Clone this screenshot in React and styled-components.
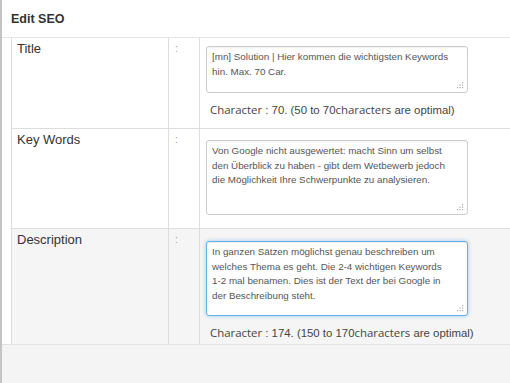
import React from "react";
import styled, { createGlobalStyle } from "styled-components";

const Global = createGlobalStyle`
  html, body { margin: 0; padding: 0; background: #fff; }
  body { width: 510px; height: 383px; overflow: hidden; font-family: "Liberation Sans", Arial, sans-serif; }
`;

const Page = styled.div`
  box-sizing: border-box;
  height: 383px;
  border-left: 2px solid #c4c4c4;
  display: flex;
  flex-direction: column;
  background: #fff;
`;

const Header = styled.div`
  height: 38px;
  box-sizing: border-box;
  padding: 0 0 0 9px;
  display: flex;
  align-items: center;
  font-weight: bold;
  font-size: 12.5px;
  color: #333;
  border-bottom: 1px solid #e5e5e5;
`;

const Body = styled.div`
  padding-left: 9px;
`;

const Table = styled.div`
  border-left: 1px solid #ddd;
`;

const Row = styled.div`
  display: grid;
  grid-template-columns: 156px 31px 1fr;
  height: ${(p) => p.$h}px;
  background: ${(p) => (p.$shade ? "#f5f5f5" : "#fff")};
  border-top: ${(p) => (p.$first ? "none" : "1px solid #ddd")};
`;

const Label = styled.div`
  padding: 2px 5px;
  font-size: 13px;
  line-height: 18px;
  color: #333;
`;

const Colon = styled.div`
  border-left: 1px solid #ddd;
  padding: 5px 0 0 6px;
  font-size: 10px;
  line-height: 12px;
  color: #999;
`;

const Field = styled.div`
  border-left: 1px solid #ddd;
  padding: ${(p) => p.$top}px 0 0 6px;
  display: flex;
  flex-direction: column;
  align-items: flex-start;
`;

const Area = styled.div`
  position: relative;
  box-sizing: border-box;
  width: 262px;
  height: ${(p) => p.$h}px;
  padding: 3px 5px;
  background: #fff;
  border: 1px solid ${(p) => (p.$focus ? "#66afe9" : "#ccc")};
  border-radius: 3px;
  box-shadow: ${(p) =>
    p.$focus ? "inset 0 1px 1px rgba(0,0,0,.075), 0 0 4px rgba(102,175,233,.6)" : "inset 0 1px 1px rgba(0,0,0,.05)"};
  font-family: "Liberation Sans", Arial, sans-serif;
  font-size: 9.8px;
  line-height: 14.5px;
  color: #555;
`;

const Line = styled.div`
  white-space: nowrap;
`;

const Grip = styled.svg`
  position: absolute;
  right: 3px;
  bottom: 3px;
`;

const Count = styled.div`
  margin: 8px 0 0 4px;
  font-size: 11.4px;
  line-height: 18px;
  color: #444;
  white-space: nowrap;
`;

const Alt = styled.span`
  font-family: "Open Sans", "Noto Sans", sans-serif;
  font-size: 11.4px;
`;

const Footer = styled.div`
  flex: 1;
  background: #f4f4f4;
  border-top: 1px solid #e2e2e2;
`;

const ResizeGrip = () => (
  <Grip width="8" height="8" viewBox="0 0 8 8">
    {[
      [6, 1],
      [6, 3.5],
      [3.5, 3.5],
      [6, 6],
      [3.5, 6],
      [1, 6],
    ].map(([x, y], i) => (
      <rect key={i} x={x} y={y} width="1.2" height="1.2" fill="#aaa" />
    ))}
  </Grip>
);

const rows = [
  {
    label: "Title",
    h: 90,
    area: 47,
    top: 8,
    lines: ["[mn] Solution | Hier kommen die wichtigsten Keywords", "hin. Max. 70 Car."],
    count: ["70", "50 to 70"],
  },
  {
    label: "Key Words",
    h: 99,
    area: 75,
    top: 11,
    lines: [
      "Von Google nicht ausgewertet: macht Sinn um selbst",
      "den Überblick zu haben - gibt dem Wetbewerb jedoch",
      "die Möglichkeit Ihre Schwerpunkte zu analysieren.",
    ],
  },
  {
    label: "Description",
    h: 115,
    area: 75,
    top: 12,
    focus: true,
    shade: true,
    lines: [
      "In ganzen Sätzen möglichst genau beschreiben um",
      "welches Thema es geht. Die 2-4 wichtigen Keywords",
      "1-2 mal benamen. Dies ist der Text der bei Google in",
      "der Beschreibung steht.",
    ],
    count: ["174", "150 to 170"],
  },
];

export default function App() {
  return (
    <>
      <Global />
      <Page>
        <Header>Edit SEO</Header>
        <Body>
          <Table>
            {rows.map((r, i) => (
              <Row key={r.label} $h={r.h} $shade={r.shade} $first={i === 0}>
                <Label>{r.label}</Label>
                <Colon>:</Colon>
                <Field $top={r.top}>
                  <Area $h={r.area} $focus={r.focus}>
                    {r.lines.map((l) => (
                      <Line key={l}>{l}</Line>
                    ))}
                    <ResizeGrip />
                  </Area>
                  {r.count && (
                    <Count>
                      <Alt>Character</Alt> : {r.count[0]}. ({r.count[1]}
                      <Alt>characters</Alt> are optimal)
                    </Count>
                  )}
                </Field>
              </Row>
            ))}
          </Table>
        </Body>
        <Footer />
      </Page>
    </>
  );
}
